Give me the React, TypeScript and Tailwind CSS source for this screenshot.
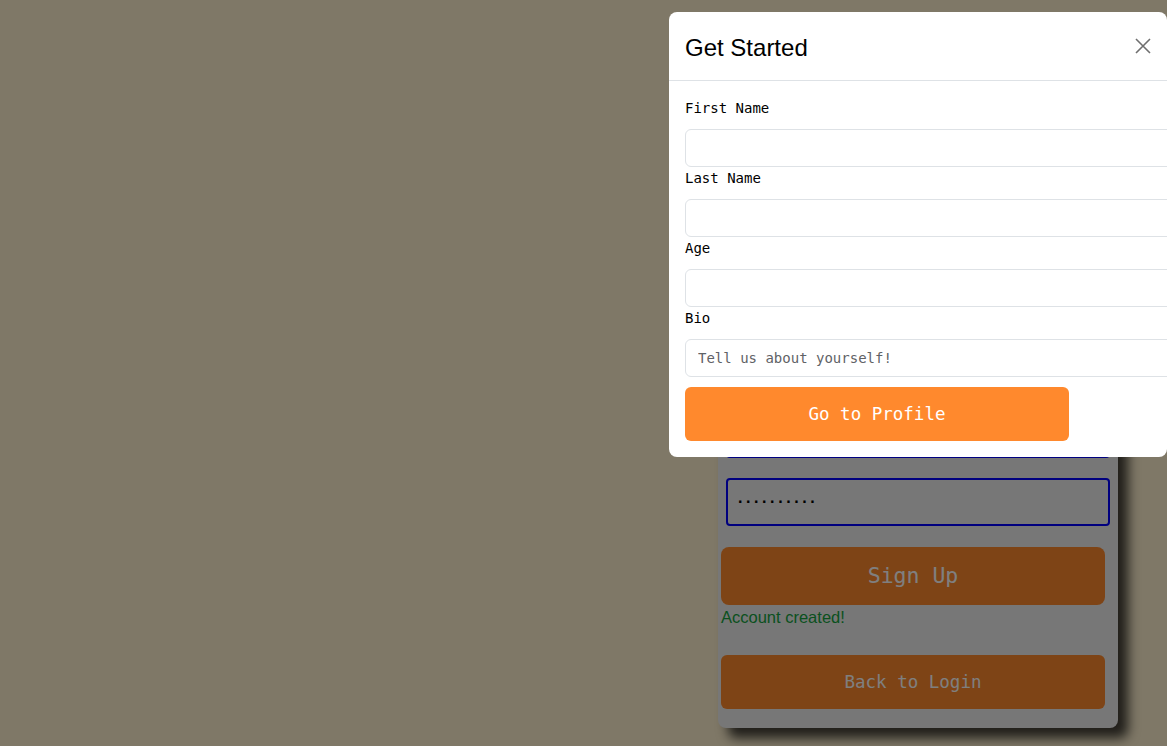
import React from 'react';

const mono = { fontFamily: '"DejaVu Sans Mono", "Liberation Mono", monospace' };

const Field: React.FC<{ label: string; placeholder?: string }> = ({ label, placeholder }) => (
    <div>
        <label className="block text-[14px] leading-[23px] mb-[9px] text-black">{label}</label>
        <input
            type="text"
            placeholder={placeholder}
            className="block w-[540px] h-[38px] border border-[#dee2e6] rounded-[6px] bg-white px-3 text-[14px] text-black outline-none placeholder:text-[#5f6266]"
            style={mono}
        />
    </div>
);

export default function App() {
    return (
        <div className="relative w-full h-[746px] overflow-hidden bg-[#fef0ce]">
            {/* Sign up card underneath */}
            <div className="flex pl-[718px] pt-[300px]">
                <div
                    className="w-[400px] h-[428px] bg-[#eeeeee] rounded-[8px] shadow-[10px_10px_12px_rgba(0,0,0,0.75)] flex flex-col pt-[30px] pb-[19px]"
                    style={mono}
                >
                    <h2 className="text-[28px] leading-[36px] text-center text-black" style={{ fontFamily: '"Liberation Sans", Arial, sans-serif' }}>
                        Sign Up
                    </h2>
                    <input
                        readOnly
                        value="new_user"
                        className="mt-[44px] ml-[8px] w-[384px] h-[48px] border-2 border-[#0000ff] rounded-[4px] bg-transparent px-[8px] text-[14px] text-black outline-none"
                    />
                    <input
                        readOnly
                        value="··········"
                        className="mt-[20px] ml-[8px] w-[384px] h-[48px] border-2 border-[#0000ff] rounded-[4px] bg-transparent px-[8px] text-[14px] font-bold tracking-[-0.4px] text-black outline-none"
                    />
                    <button className="mt-[21px] ml-[3px] w-[384px] h-[58px] rounded-[8px] bg-[#fd882c] text-white text-[21.5px]">
                        Sign Up
                    </button>
                    <p
                        className="ml-[3px] text-[16.5px] leading-[25px] text-[#15a23e]"
                        style={{ fontFamily: '"Liberation Sans", Arial, sans-serif' }}
                    >
                        Account created!
                    </p>
                    <button className="mt-[25px] ml-[3px] w-[384px] h-[54px] rounded-[6px] bg-[#fd882c] text-white text-[17.5px]">
                        Back to Login
                    </button>
                </div>
            </div>

            {/* Backdrop */}
            <div className="absolute inset-0 bg-black/50" />

            {/* Get Started modal */}
            <div className="absolute left-[669px] top-[12px] w-[498px] bg-white rounded-[8px]">
                <div className="flex items-center justify-between h-[69px] px-4 border-b border-[#dee2e6]">
                    <h1
                        className="text-[24px] leading-[36px] mt-[3px] text-black"
                        style={{ fontFamily: '"Liberation Sans", Arial, sans-serif' }}
                    >
                        Get Started
                    </h1>
                    <button className="w-4 h-4 flex items-center justify-center">
                        <svg width="16" height="16" viewBox="0 0 16 16" fill="none" stroke="#6f6f6f" strokeWidth="1.6">
                            <path d="M1 1 L15 15 M15 1 L1 15" />
                        </svg>
                    </button>
                </div>
                <div className="px-4 pt-4 pb-4 flex flex-col" style={mono}>
                    <Field label="First Name" />
                    <Field label="Last Name" />
                    <Field label="Age" />
                    <Field label="Bio" placeholder="Tell us about yourself!" />
                    <button className="mt-[10px] w-[384px] h-[54px] rounded-[6px] bg-[#ff892d] text-white text-[17.5px]">
                        Go to Profile
                    </button>
                </div>
            </div>
        </div>
    );
}
